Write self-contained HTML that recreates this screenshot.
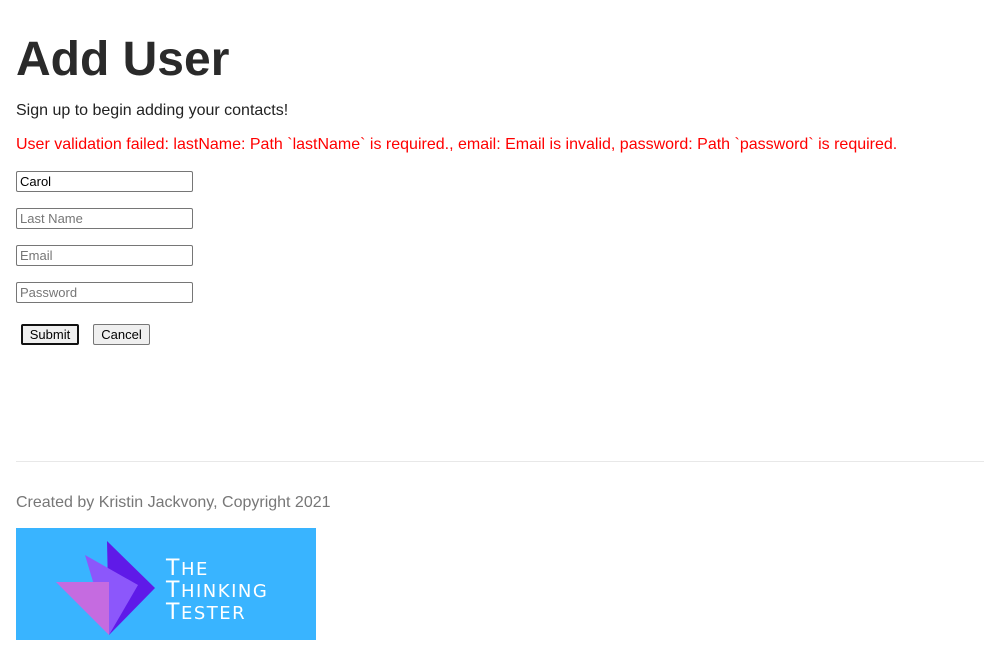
<!DOCTYPE html>
<html><head><meta charset="utf-8"><style>
body{margin:0;background:#fff;font-family:"Liberation Sans",Arial,sans-serif;color:#222;}
h1{position:absolute;left:16px;top:32px;margin:0;font-size:48px;font-weight:bold;color:#2a2a2a;line-height:56px}
.p{position:absolute;left:16px;font-size:16px;line-height:20px}
.in{position:absolute;left:16px;width:177px;height:21px;box-sizing:border-box;border:1px solid #767676;border-radius:2px;font-size:13px;padding:2px 3px;line-height:15px;color:#767676}
.btn{position:absolute;top:324px;height:21px;box-sizing:border-box;border:1px solid #767676;border-radius:2px;background:#efefef;font-size:13px;text-align:center;line-height:19px;color:#000}
</style></head><body>
<h1>Add User</h1>
<div class="p" style="top:101px">Sign up to begin adding your contacts!</div>
<div class="p" style="top:135px;color:#f00">User validation failed: lastName: Path `lastName` is required., email: Email is invalid, password: Path `password` is required.</div>
<div class="in" style="top:171px;color:#000">Carol</div>
<div class="in" style="top:208px">Last Name</div>
<div class="in" style="top:245px">Email</div>
<div class="in" style="top:282px">Password</div>
<div class="btn" style="left:21px;width:58px;border:2px solid #111;line-height:17px">Submit</div>
<div class="btn" style="left:93px;width:57px">Cancel</div>
<div style="position:absolute;left:16px;top:461px;width:968px;height:1px;background:#e8e8e8"></div>
<div class="p" style="top:493px;color:#777">Created by Kristin Jackvony, Copyright 2021</div>
<svg style="position:absolute;left:16px;top:528px" width="300" height="112" viewBox="0 0 300 112">
<rect width="300" height="112" fill="#39b4ff"/>
<polygon points="91,13 139,60 93,107" fill="#5f1ae8"/>
<polygon points="69,27 122,57 93,107" fill="#8c57fb"/>
<polygon points="40,54 93,54 93,107" fill="#c56be0"/>
<g fill="#fff" font-family="DejaVu Sans,sans-serif" letter-spacing="1.5">
<text x="150" y="47" font-size="22">T<tspan font-size="18">HE</tspan></text>
<text x="150" y="69" font-size="22">T<tspan font-size="18">HINKING</tspan></text>
<text x="150" y="91" font-size="22">T<tspan font-size="18">ESTER</tspan></text>
</g>
</svg>
</body></html>
